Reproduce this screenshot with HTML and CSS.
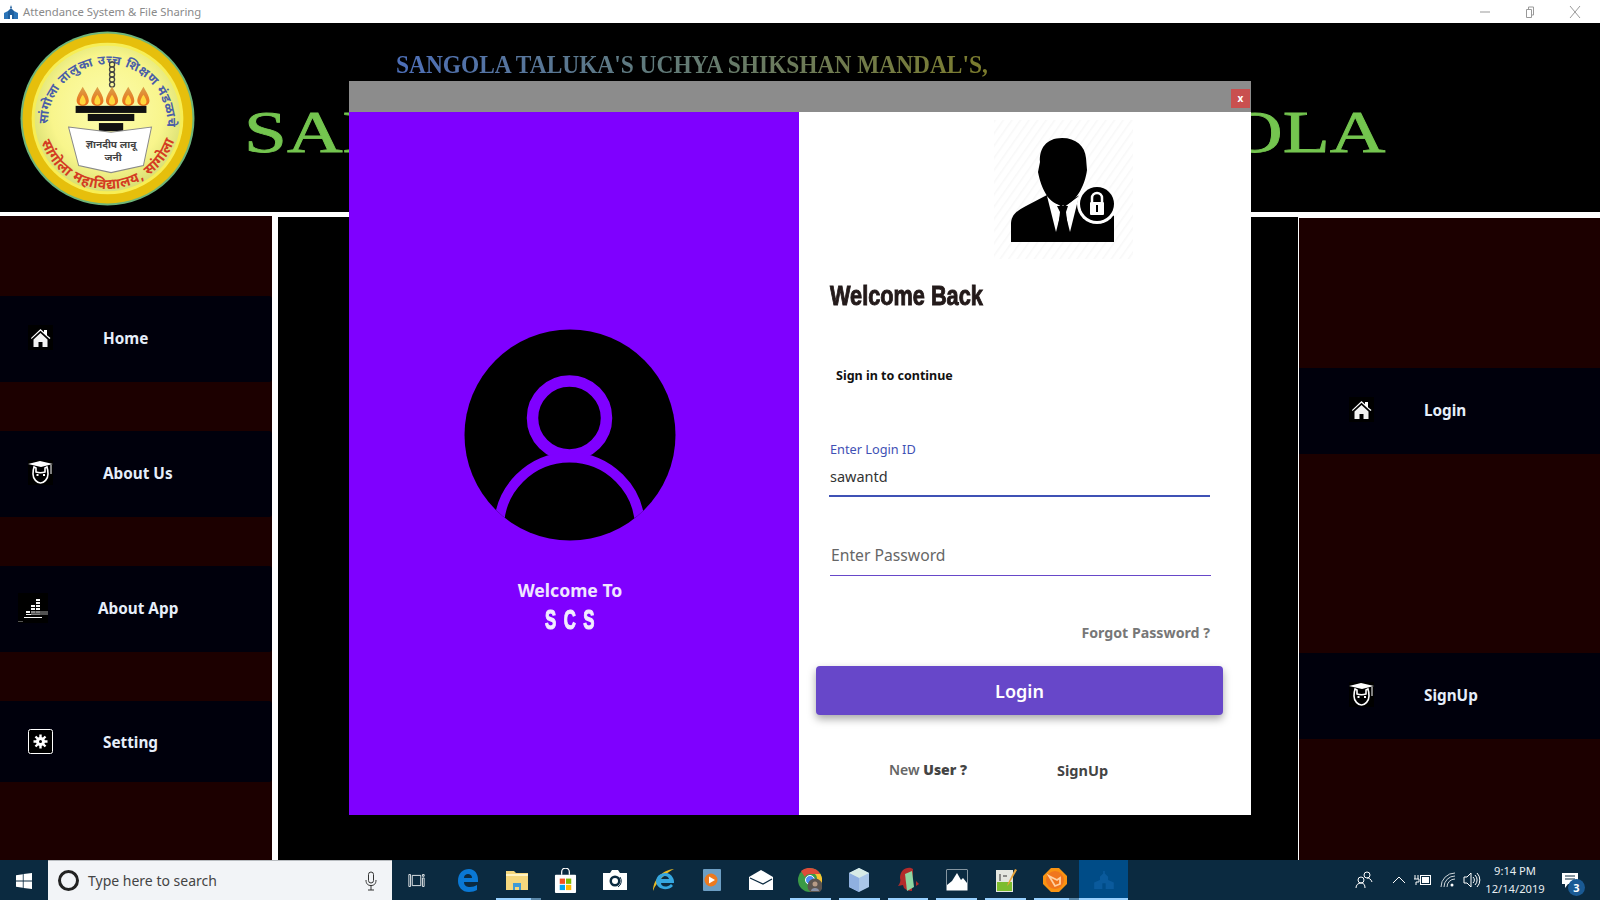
FILE: index.html
```html
<!DOCTYPE html>
<html lang="en">
<head>
    <meta charset="UTF-8">
    <title>Attendance System &amp; File Sharing</title>
    <link rel="stylesheet" href="styles.css">
</head>
<body>

<svg class="defs" width="0" height="0">
    <symbol id="i-home" viewBox="0 0 25 25">
        <rect width="25" height="25" fill="#000"/>
        <path d="M3 13 12.500 4 16 7.300V5h3v5.200L22.500 13l-1 1-9-8.300-9 8.300z" fill="#fff"/>
        <path d="M5.500 14.500 12.500 8l7 6.500V22h-5v-5h-4v5h-5z" fill="#f2f2f2"/>
    </symbol>
    <symbol id="i-grad" viewBox="0 0 25 25">
        <rect width="25" height="25" fill="#000"/>
        <path d="M0 4 12 1l13 3-12 3z" fill="#fff"/>
        <path d="M6 7c-1 3-1 5-1 7 0 5 4 9 7.500 9s7.500-4 7.500-9c0-2 0-4-1-7l-2 1v4c-3 1-6 1-9 0V8z" fill="none" stroke="#fff" stroke-width="1.600"/>
        <path d="M23 5v9" stroke="#fff" stroke-width="1"/>
        <rect x="8.500" y="14" width="2" height="2" fill="#fff"/>
        <rect x="15" y="14" width="2" height="2" fill="#fff"/>
    </symbol>
</svg>

<div class="titlebar">
    <svg class="app-icon" viewBox="0 0 14 14">
        <path d="M7 0l1 3H6z" fill="#1f5f9e"/>
        <path d="M4 6l3-3 3 3v8H4z" fill="#1f5f9e"/>
        <path d="M0 8l4-2v8H0zM14 8l-4-2v8h4z" fill="#2b74b8"/>
        <rect x="6" y="10" width="2" height="4" fill="#fff"/>
    </svg>
    <span class="app-name">Attendance System &amp; File Sharing</span>
    <div class="win-btns">
        <svg viewBox="0 0 12 12" class="win-btn"><path d="M1 6h10" stroke="#999" fill="none"/></svg>
        <svg viewBox="0 0 12 12" class="win-btn"><path d="M2.500 3.500h5v8h-5zM4.500 3.500v-2.500h5v8h-2" stroke="#999" fill="none"/></svg>
        <svg viewBox="0 0 12 12" class="win-btn"><path d="M1 0l10 12M11 0 1 12" stroke="#999" fill="none"/></svg>
    </div>
</div>

<div class="banner">
    <svg class="logo" viewBox="0 0 173 173">
        <defs>
            <radialGradient id="lg-face" cx="50%" cy="45%" r="55%">
                <stop offset="0" stop-color="#fdfdb0"/>
                <stop offset="0.7" stop-color="#f8f58c"/>
                <stop offset="1" stop-color="#d9df73"/>
            </radialGradient>
            <linearGradient id="lg-flame" x1="0" y1="0" x2="0" y2="1">
                <stop offset="0" stop-color="#d9a24a"/>
                <stop offset="1" stop-color="#ee6a12"/>
            </linearGradient>
            <path id="arc-top" d="M27.500 92A59 59 0 1 1 145.500 92"/>
            <path id="arc-bot" d="M21 110A69.500 69.500 0 0 0 153.500 105"/>
            <g id="flame">
                <path d="M0 0c-3.500 6-6 10-6 14 0 3 2.500 5 6 5s6-2 6-5c0-4-2.500-8-6-14z" fill="url(#lg-flame)"/>
                <path d="M0 8c-2 3-3 5-3 7 0 2 1 3 3 3s3-1 3-3c0-2-1-4-3-7z" fill="#ffd83c"/>
            </g>
        </defs>
        <circle cx="86.500" cy="86.500" r="86" fill="#6fb57a"/>
        <circle cx="86.500" cy="86.500" r="84" fill="#e6bf0c"/>
        <circle cx="86.500" cy="86.500" r="75" fill="#f7ee55"/>
        <circle cx="86.500" cy="86.500" r="72" fill="url(#lg-face)"/>
        <text class="logo-top"><textPath href="#arc-top" textLength="188" lengthAdjust="spacing">सांगोला तालुका उच्च शिक्षण मंडळाचे</textPath></text>
        <text class="logo-bot"><textPath href="#arc-bot" textLength="172" lengthAdjust="spacing">सांगोला महाविद्यालय, सांगोला</textPath></text>
        <g fill="none" stroke="#444" stroke-width="1.300">
            <circle cx="91" cy="33" r="2.500"/><circle cx="91" cy="38" r="2.500"/><circle cx="91" cy="43" r="2.500"/><circle cx="91" cy="48" r="2.500"/><circle cx="91" cy="53" r="2.500"/>
        </g>
        <use href="#flame" x="62" y="55"/>
        <use href="#flame" x="76.500" y="55"/>
        <use href="#flame" x="91" y="55"/>
        <use href="#flame" x="107" y="55"/>
        <use href="#flame" x="122" y="55"/>
        <rect x="55" y="74" width="70" height="7" fill="#111"/>
        <rect x="67" y="82" width="46" height="7" fill="#111"/>
        <rect x="78" y="91" width="24" height="8" fill="#111"/>
        <path d="M48 95 90 100 130 95 122 133 90 140 58 133z" fill="#fff" stroke="#8a8a8a" stroke-width="1"/>
        <text class="logo-small" x="90" y="116" text-anchor="middle">ज्ञानदीप लावू</text>
        <text class="logo-small" x="92" y="129" text-anchor="middle">जनी</text>
    </svg>
    <div class="banner-text">
        <div class="trust-name">SANGOLA TALUKA'S UCHYA SHIKSHAN MANDAL'S,</div>
        <div class="college-name">SANGOLA COLLEGE, SANGOLA</div>
    </div>
</div>

<div class="main">
    <div class="side side-left">
        <a class="nav-item"><svg class="nav-icon"><use href="#i-home"/></svg><span>Home</span></a>
        <a class="nav-item"><svg class="nav-icon"><use href="#i-grad"/></svg><span>About Us</span></a>
        <a class="nav-item nav-app">
            <svg class="nav-icon" viewBox="0 0 30 30">
                <rect width="30" height="30" fill="#000"/>
                <g fill="#f4f4f4">
                    <rect x="18" y="6" width="4" height="2"/><rect x="18" y="9" width="4" height="2"/><rect x="18" y="12" width="4" height="2"/><rect x="18" y="15" width="4" height="2"/><rect x="18" y="18" width="4" height="2"/>
                    <rect x="13" y="12" width="4" height="2"/><rect x="13" y="15" width="4" height="2"/><rect x="13" y="18" width="4" height="2"/>
                    <rect x="8" y="18" width="4" height="2"/><rect x="8" y="21" width="14" height="1"/><rect x="6" y="24" width="18" height="1"/>
                </g>
                <rect x="13" y="18" width="17" height="4" fill="#666" opacity="0.8"/>
                <rect x="0" y="28" width="5" height="1" fill="#555"/>
            </svg>
            <span>About App</span>
        </a>
        <a class="nav-item nav-last">
            <svg class="nav-icon" viewBox="0 0 25 25">
                <rect x="0.500" y="0.500" width="24" height="24" rx="2" fill="#000" stroke="#fff"/>
                <circle cx="12.500" cy="12.500" r="4.500" fill="#fff"/>
                <path d="M12.500 5.500v14M5.500 12.500h14M7.500 7.500l10 10M17.500 7.500l-10 10" stroke="#fff" stroke-width="2.400"/>
                <circle cx="12.500" cy="12.500" r="1.500" fill="#000"/>
            </svg>
            <span>Setting</span>
        </a>
    </div>
    <div class="center"></div>
    <div class="side side-right">
        <a class="nav-item"><svg class="nav-icon"><use href="#i-home"/></svg><span>Login</span></a>
        <a class="nav-item"><svg class="nav-icon"><use href="#i-grad"/></svg><span>SignUp</span></a>
    </div>
</div>

<div class="taskbar">
    <svg class="start" viewBox="0 0 16 16"><path d="M0 2.200 6.800 1.200V7.600H0zM7.600 1.100 16 0V7.600H7.600zM0 8.400H6.800V14.800L0 13.800zM7.600 8.400H16V16L7.600 14.900z" fill="#fff"/></svg>
    <div class="search">
        <span class="cortana"></span>
        <span class="search-text">Type here to search</span>
        <svg class="mic" viewBox="0 0 12 20"><rect x="3.500" y="1" width="5" height="11" rx="2.500" fill="none" stroke="#333"/><path d="M1 9c0 4 2 5.500 5 5.500S11 13 11 9M6 14.500V19M3 19h6" fill="none" stroke="#333"/></svg>
    </div>
    <div class="task-apps">
        <div class="task-app task-view"><svg viewBox="0 0 20 20" width="17" height="17"><path d="M1 3h2v14H1zM5 4h10v12H5zM17 3h2v2h-2zM17 7h2v10h-2z" fill="none" stroke="#fff" stroke-width="1"/></svg></div>
        <div class="task-app"><svg viewBox="0 0 22 24" width="22" height="24"><path d="M1 13C1 5 6 1 12 1c6 0 9 5 9 11v2H7c0 4 3 5 6 5 3 0 5-1 7-2v5c-2 1-5 2-8 2C5 24 1 19 1 13zM7 10h8c0-3-2-4-4-4-2 0-4 1-4 4z" fill="#0a78d4"/></svg></div>
        <div class="task-app open-part"><svg viewBox="0 0 22 20" width="22" height="20"><path d="M0 1h8l2 2h12v17H0z" fill="#f5d77d"/><path d="M0 4h22v2H0z" fill="#fff3c4"/><path d="M7 13h8v7h-2v-3H9v3H7z" fill="#3e9ad6"/></svg></div>
        <div class="task-app"><svg viewBox="0 0 24 26" width="23" height="25"><rect x="1" y="7" width="22" height="19" rx="1" fill="#fff"/><path d="M8 7V4a4 4 0 0 1 8 0v3" fill="none" stroke="#fff" stroke-width="1.300"/><rect x="6" y="11" width="5.500" height="5.500" fill="#f25022"/><rect x="12.500" y="11" width="5.500" height="5.500" fill="#7fba00"/><rect x="6" y="17.500" width="5.500" height="5.500" fill="#00a4ef"/><rect x="12.500" y="17.500" width="5.500" height="5.500" fill="#ffb900"/></svg></div>
        <div class="task-app"><svg viewBox="0 0 24 20" width="24" height="20"><path d="M0 3h7l2-3h6l2 3h7v17H0z" fill="#fff"/><circle cx="12" cy="11" r="5.500" fill="#0b2a40"/><circle cx="12" cy="11" r="3" fill="#fff"/><path d="M17 7a7 7 0 0 1-2 10" fill="none" stroke="#0b2a40"/></svg></div>
        <div class="task-app"><svg viewBox="0 0 24 24" width="24" height="24"><path d="M1 23C1 12 10 2 22 1c-7 3-18 13-21 22z" fill="#e8b923"/><path d="M4 13a9 9 0 0 1 17-3c1 2 1 3 1 5H9c0 4 6 5 10 1l2 2c-6 6-17 3-17-5zM9 11h8c-1-4-7-4-8 0z" fill="#35a7e0"/></svg></div>
        <div class="task-app"><svg viewBox="0 0 20 24" width="20" height="24"><rect x="1" y="1" width="18" height="22" rx="1" fill="#6c9ec4"/><circle cx="9" cy="12" r="6.500" fill="#ed7a1f"/><path d="M7 8.500 13 12 7 15.500z" fill="#fff"/></svg></div>
        <div class="task-app"><svg viewBox="0 0 24 20" width="24" height="20"><path d="M0 7 12 0l12 7v13H0z" fill="#fff"/><path d="M1 8 14 14l9-5" fill="none" stroke="#0b2a40" stroke-width="1.300"/></svg></div>
        <div class="task-app open"><svg viewBox="0 0 24 24" width="24" height="24"><circle cx="12" cy="12" r="12" fill="#3b9a46"/><path d="M12 0a12 12 0 0 1 10.400 6H12a6 6 0 0 0-5.200 3L3 3a12 12 0 0 1 9-3z" fill="#dd4b39"/><path d="M22.400 6A12 12 0 0 1 12 24l5-9a6 6 0 0 0 0-9z" fill="#f7c331"/><circle cx="12" cy="12" r="4.500" fill="#4c8bf5" stroke="#fff"/><circle cx="17" cy="18" r="7.500" fill="#5c5550"/><circle cx="17" cy="16" r="2.500" fill="#b79b86"/><path d="M13 23c0-4 8-4 8 0z" fill="#8a93a8"/></svg></div>
        <div class="task-app open"><svg viewBox="0 0 20 24" width="20" height="24"><path d="M10 0 20 5v14L10 24 0 19V5z" fill="#a9c6e8"/><path d="M10 0 20 5 10 10 0 5z" fill="#d7ebe6"/><path d="M0 5l10 5v14L0 19z" fill="#8fb0e0"/></svg></div>
        <div class="task-app open"><svg viewBox="0 0 24 26" width="24" height="26"><path d="M4 11C4 4 9 0 15 1l2 1-1 22c-4 0-6-1-8-3l-1-3-5 1c2-3 3-5 2-8z" fill="#b32b2b"/><path d="M9 7 16 4l2 16-7 4z" fill="#8fd6a2"/><path d="M20 14l3 3-3 2z" fill="#b32b2b"/></svg></div>
        <div class="task-app open"><svg viewBox="0 0 22 22" width="22" height="22"><rect x="0.500" y="0.500" width="21" height="21" fill="#fff"/><path d="M1 1h20v13l-4-5-2 2-4-7-5 8-5 4z" fill="#0b2a40"/></svg></div>
        <div class="task-app open"><svg viewBox="0 0 22 24" width="22" height="24"><rect x="1" y="2" width="17" height="22" fill="#e4e7e0"/><rect x="2" y="14" width="15" height="9" fill="#7cbc2e"/><path d="M5 6v7M8 8h4" stroke="#333"/><path d="M20 1 13 15l-1 3 2-2 8-14z" fill="#e8a33a"/></svg></div>
        <div class="task-app open-part"><svg viewBox="0 0 24 24" width="24" height="24"><path d="M8 0h8l8 8v8l-8 8H8l-8-8V8z" fill="#f99312"/><circle cx="12" cy="12" r="9" fill="#f0761e"/><path d="M6 8l8 4 3-2v6l-5 2z" fill="none" stroke="#ffd0a0" stroke-width="1.800"/></svg></div>
        <div class="task-app open active"><svg viewBox="0 0 24 22" width="20" height="18"><path d="M11 0h2v3l4 4v4l7 3v8H0v-8l7-3V7l4-4z" fill="#0a5a9c"/><rect x="10" y="15" width="4" height="7" fill="#004c87"/></svg></div>
    </div>
    <div class="tray">
        <svg class="tray-people" viewBox="0 0 18 18" width="18" height="18"><circle cx="6" cy="9" r="3" fill="none" stroke="#fff"/><circle cx="12" cy="4" r="3" fill="none" stroke="#fff"/><path d="M1 17c0-3 2-5 5-5s4 2 4 5M12 7c2 0 4 1 5 4" fill="none" stroke="#fff"/></svg>
        <svg class="tray-chev" viewBox="0 0 14 8" width="14" height="8"><path d="M1 7 7 1l6 6" fill="none" stroke="#fff"/></svg>
        <svg class="tray-batt" viewBox="0 0 18 14" width="18" height="14"><path d="M1 2v4M4 2v4M0 6h5v3H2v3" fill="none" stroke="#fff"/><rect x="6.500" y="2.500" width="10" height="9" fill="none" stroke="#fff"/><rect x="8" y="4" width="7" height="6" fill="#fff"/></svg>
        <svg class="tray-wifi" viewBox="0 0 16 16" width="16" height="16"><path d="M1 15A14 14 0 0 1 15 1M4 15A11 11 0 0 1 15 4M7 15A8 8 0 0 1 15 7" fill="none" stroke="#cfd6db"/><circle cx="12" cy="13" r="1.500" fill="#fff"/></svg>
        <svg class="tray-vol" viewBox="0 0 18 16" width="18" height="16"><path d="M1 5h3l4-4v14l-4-4H1z" fill="none" stroke="#fff"/><path d="M10 5a4 4 0 0 1 0 6M12 3a7 7 0 0 1 0 10M14 1a10 10 0 0 1 0 14" fill="none" stroke="#fff"/></svg>
        <div class="clock"><div>9:14 PM</div><div>12/14/2019</div></div>
        <div class="notify">
            <svg viewBox="0 0 16 15" width="16" height="15"><path d="M0 0h16v11H6l-3 4v-4H0z" fill="#fff"/><path d="M3 3h10M3 6h10" stroke="#0b2a40"/></svg>
            <span class="badge">3</span>
        </div>
    </div>
</div>

<div class="modal">
    <div class="modal-head"><span class="modal-close">x</span></div>
    <div class="modal-body">
        <div class="modal-left">
            <svg class="avatar" viewBox="0 0 212 212">
                <defs><clipPath id="avatar-clip"><circle cx="106" cy="106" r="105.500"/></clipPath></defs>
                <circle cx="106" cy="106" r="105.500" fill="#000"/>
                <g clip-path="url(#avatar-clip)" fill="none" stroke="#7f00ff">
                    <circle cx="105.500" cy="89" r="37" stroke-width="11.500"/>
                    <circle cx="105.500" cy="199" r="70.500" stroke-width="10"/>
                </g>
            </svg>
            <div class="welcome-to">Welcome To</div>
            <div class="scs">SCS</div>
        </div>
        <div class="modal-right">
            <svg class="user-lock" viewBox="0 0 139 139">
                <defs>
                    <pattern id="hatch" width="7" height="7" patternUnits="userSpaceOnUse" patternTransform="rotate(35)">
                        <rect width="7" height="7" fill="#fff"/><rect width="1.500" height="7" fill="#f8f8f8"/>
                    </pattern>
                </defs>
                <rect width="139" height="139" fill="url(#hatch)"/>
                <path d="M17 122V103C18 93 25 90 32 86L53 75 69 84 86 75 104 84 120 96V122z" fill="#000"/>
                <path d="M53 76 62 112 69 84 76 112 85 76 69 88z" fill="#fff"/>
                <path d="M63 86H74L72 92 74 109 69 115 64 109 66 92z" fill="#000"/>
                <path d="M68 18C52 18 45 29 46 42L44 52C47 68 55 85 68 85 81 85 91 66 93 50L92 38C91 26 82 18 68 18z" fill="#000"/>
                <circle cx="103" cy="84" r="20" fill="#fff"/>
                <circle cx="103" cy="84" r="17" fill="#000"/>
                <rect x="96" y="82" width="14" height="13" rx="1" fill="#fff"/>
                <path d="M98 82V78a5 5 0 0 1 10 0v4" fill="none" stroke="#fff" stroke-width="2.500"/>
                <rect x="102" y="85" width="2" height="7" fill="#000"/>
            </svg>
            <h2 class="welcome-back">Welcome Back</h2>
            <p class="sign-in">Sign in to continue</p>
            <div class="field field-focus">
                <label>Enter Login ID</label>
                <div class="field-value">sawantd</div>
            </div>
            <div class="field field-blank">
                <div class="field-hint">Enter Password</div>
            </div>
            <div class="forgot">Forgot Password ?</div>
            <button class="login-btn">Login</button>
            <div class="signup-row">
                <span class="new-user">New <b>User ?</b></span>
                <span class="signup-link">SignUp</span>
            </div>
        </div>
    </div>
</div>

</body>
</html>
```
FILE: styles.css
```css
*{
    margin: 0;
    padding: 0;
    box-sizing: border-box;
}
body{
    width: 1600px;
    height: 900px;
    overflow: hidden;
    position: relative;
    background: #fff;
    font-family: "Noto Sans", "Open Sans", sans-serif;
}
.defs{
    display: block;
    height: 0;
}

/* window title */
.titlebar{
    height: 23px;
    display: flex;
    align-items: center;
    padding-left: 4px;
}
.app-icon{
    width: 14px;
    height: 14px;
}
.app-name{
    margin-left: 5px;
    font-size: 11.300px;
    color: #8a8a8a;
}
.win-btns{
    margin-left: auto;
    display: flex;
    gap: 33px;
    padding-right: 19px;
}
.win-btn{
    width: 12px;
    height: 12px;
}

/* banner */
.banner{
    height: 189px;
    background: #000;
    display: flex;
    padding-left: 20px;
}
.logo{
    width: 175px;
    height: 175px;
    margin-top: 8px;
    flex: none;
}
.logo-small{
    font-family: "Noto Sans", sans-serif;
    font-size: 10px;
    font-weight: 700;
    fill: #444;
}
.logo-top{
    font-family: "Noto Sans", sans-serif;
    font-size: 12.500px;
    font-weight: 700;
    fill: #4a5ea8;
}
.logo-bot{
    font-family: "Noto Sans", sans-serif;
    font-size: 14px;
    font-weight: 700;
    fill: #d43c22;
}
.banner-text{
    margin-left: 52px;
    white-space: nowrap;
}
.trust-name{
    display: inline-block;
    margin: 27px 0 0 149px;
    font-family: "Liberation Serif", serif;
    font-size: 26px;
    line-height: 30px;
    font-weight: 700;
    background: linear-gradient(90deg, #4d6fb9 0, #5f7a80 40%, #7c7c2c 100%);
    -webkit-background-clip: text;
    background-clip: text;
    color: transparent;
    transform: scaleX(0.9);
    transform-origin: left;
}
.college-name{
    margin: 17px 0 0 -3px;
    font-family: "Liberation Serif", serif;
    font-size: 60px;
    line-height: 70px;
    color: #74c54f;
    -webkit-text-stroke: 0.8px #74c54f;
    transform: scaleX(1.285);
    transform-origin: left;
}

/* columns */
.main{
    height: 648px;
    display: flex;
    background: #fff;
}
.side{
    background: #1c0000;
    display: flex;
    flex-direction: column;
}
.side-left{
    width: 272px;
    margin-top: 4px;
    padding-top: 80px;
    gap: 49px;
}
.center{
    width: 1020px;
    margin: 5px 1px 0 6px;
    background: #000;
}
.side-right{
    flex: 1;
    margin-top: 6px;
    padding-top: 150px;
    gap: 199px;
}
.nav-item{
    height: 86px;
    background: #00000c;
    border-radius: 0 3px 3px 0;
    display: flex;
    align-items: center;
    gap: 50px;
    padding: 0 0 3px 28px;
    color: #e6eefa;
    font-size: 15.300px;
    font-weight: 700;
    cursor: pointer;
}
.nav-app{
    padding-left: 18px;
}
.nav-app .nav-icon{
    width: 30px;
    height: 30px;
}
.nav-last{
    height: 81px;
    padding-bottom: 0;
}
.side-right .nav-item{
    padding-left: 50px;
    border-radius: 0;
}
.nav-icon{
    width: 25px;
    height: 25px;
    flex: none;
}

/* taskbar */
.taskbar{
    height: 40px;
    background: #0b2a40;
    display: flex;
    align-items: stretch;
    color: #fff;
}
.start{
    width: 16px;
    height: 16px;
    margin: 13px 16px 0 16px;
}
.search{
    width: 344px;
    background: #f2f4f7;
    border-top: 1px solid #b8bcc0;
    display: flex;
    align-items: center;
    padding-left: 10px;
}
.cortana{
    width: 21px;
    height: 21px;
    border: 3px solid #222;
    border-radius: 50%;
}
.search-text{
    margin-left: 9px;
    font-size: 14px;
    color: #444;
}
.mic{
    width: 12px;
    height: 20px;
    margin-left: auto;
    margin-right: 15px;
}
.task-apps{
    display: flex;
}
.task-app{
    width: 48.900px;
    display: flex;
    align-items: center;
    justify-content: center;
    position: relative;
}
.task-view{
    width: 51.500px;
    padding-right: 3px;
}
.open::after, .open-part::after{
    content: "";
    position: absolute;
    left: 4px;
    right: 4px;
    bottom: 0;
    height: 2px;
    background: #99d1ff;
}
.open-part::after{
    right: 0;
    background: linear-gradient(90deg, #99d1ff 78%, #5a87a8 78%);
}
.active{
    background: #004c87;
}
.active::after{
    left: 0;
    right: 0;
}
.tray{
    margin-left: auto;
    display: flex;
    align-items: center;
    padding-right: 22px;
}
.tray-people{
    margin-right: 19px;
}
.tray-chev{
    margin-right: 8px;
}
.tray-batt{
    margin-right: 8px;
}
.tray-wifi{
    margin-right: 7px;
}
.clock{
    width: 68px;
    font-size: 11.200px;
    line-height: 18px;
    text-align: center;
    color: #e8edf0;
}
.notify{
    margin-left: 13px;
    position: relative;
    display: flex;
}
.badge{
    position: absolute;
    left: 6px;
    top: 6px;
    width: 17px;
    height: 17px;
    border-radius: 50%;
    background: #1a5a94;
    font-size: 11px;
    font-weight: 700;
    line-height: 17px;
    text-align: center;
}

/* login dialog */
.modal{
    position: absolute;
    left: 349px;
    top: 81px;
    width: 902px;
    height: 734px;
    display: flex;
    flex-direction: column;
}
.modal-head{
    height: 31px;
    background: #8c8c8c;
    display: flex;
    justify-content: flex-end;
    padding: 8px 1px 0 0;
}
.modal-close{
    width: 19px;
    height: 19px;
    background: #c9504f;
    color: #fff;
    font-size: 10px;
    font-weight: 700;
    line-height: 19px;
    text-align: center;
}
.modal-body{
    flex: 1;
    display: flex;
}
.modal-left{
    width: 450px;
    background: #7f00ff;
    display: flex;
    flex-direction: column;
    align-items: center;
    padding: 217px 8px 0 0;
}
.avatar{
    width: 212px;
    height: 212px;
}
.welcome-to{
    margin-top: 37px;
    font-size: 17.600px;
    line-height: 24px;
    font-weight: 700;
    color: #f0e6ff;
}
.scs{
    margin-top: 3px;
    padding-left: 12px;
    font-family: "Liberation Sans", sans-serif;
    font-size: 27px;
    line-height: 30px;
    font-weight: 700;
    letter-spacing: 12px;
    color: #f2ecff;
    -webkit-text-stroke: 1.200px #f2ecff;
    transform: scaleX(0.62);
}
.modal-right{
    flex: 1;
    background: #fff;
    display: flex;
    flex-direction: column;
    align-items: flex-start;
}
.user-lock{
    width: 139px;
    height: 139px;
    margin: 8px 0 0 195px;
}
.welcome-back{
    margin: 22px 0 0 31px;
    font-family: "Liberation Sans", sans-serif;
    font-size: 28px;
    line-height: 30px;
    font-weight: 700;
    color: #231a1a;
    -webkit-text-stroke: 1px #231a1a;
    transform: scaleX(0.775);
    transform-origin: left;
}
.sign-in{
    margin: 55px 0 0 37px;
    font-size: 12.500px;
    line-height: 20px;
    font-weight: 700;
    color: #111;
}
.field{
    width: 381px;
}
.field-focus{
    margin: 54px 0 0 30px;
    border-bottom: 2px solid #3f51b5;
    padding-bottom: 8px;
}
.field label{
    display: block;
    padding-left: 1px;
    font-size: 12.750px;
    line-height: 18px;
    color: #3f51b5;
}
.field-value{
    margin-top: 7px;
    padding-left: 1px;
    font-size: 14.500px;
    line-height: 22px;
    color: #333;
}
.field-blank{
    margin: 46px 0 0 31px;
    border-bottom: 1px solid #6747c9;
    padding: 0 0 8px 1px;
}
.field-hint{
    font-size: 15.700px;
    line-height: 24px;
    color: #666;
}
.forgot{
    width: 380px;
    margin: 47px 0 0 31px;
    text-align: right;
    font-size: 14.200px;
    line-height: 20px;
    font-weight: 700;
    color: #777;
}
.login-btn{
    width: 407px;
    height: 49px;
    margin: 23px 0 0 17px;
    border: 0;
    border-radius: 4px;
    background: #6747c9;
    box-shadow: 0 4px 8px rgba(0, 0, 0, 0.35);
    color: #fff;
    font-family: inherit;
    font-size: 18px;
    font-weight: 600;
}
.signup-row{
    margin: 45px 0 0 90px;
    display: flex;
    font-size: 14px;
    line-height: 20px;
    font-weight: 600;
    color: #666;
}
.new-user b{
    color: #444;
}
.signup-link{
    margin-left: 90px;
    font-size: 14.500px;
    font-weight: 700;
    color: #444;
}
```
